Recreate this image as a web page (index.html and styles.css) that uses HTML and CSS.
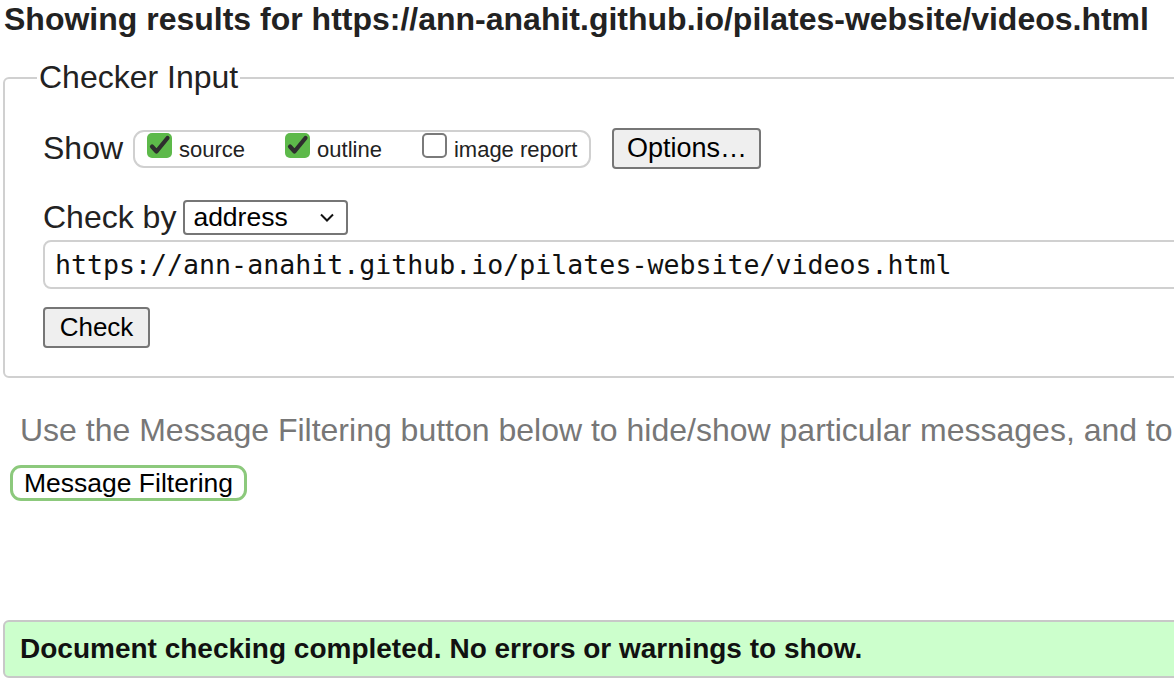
FILE: index.html
```html
<!DOCTYPE html>
<html lang="en">
<head>
<meta charset="utf-8">
<title>Nu Html Checker</title>
<link rel="stylesheet" href="styles.css">
</head>
<body>
<h2 class="title">Showing results for https://ann-anahit.github.io/pilates-website/videos.html</h2>
<form class="form">
  <fieldset class="checker">
    <legend class="legend">Checker Input</legend>
    <div class="row show-row">
      <span class="label">Show</span>
      <div class="group">
        <label class="opt">
          <span class="box checked"><svg width="25" height="25" viewBox="0 0 25 25"><path d="M5 13.5 L9.5 18.5 L20.5 5" fill="none" stroke="#2e2e2e" stroke-width="4.2" stroke-linecap="round" stroke-linejoin="round"/></svg></span>
          <span class="opt-text">source</span>
        </label>
        <label class="opt">
          <span class="box checked"><svg width="25" height="25" viewBox="0 0 25 25"><path d="M5 13.5 L9.5 18.5 L20.5 5" fill="none" stroke="#2e2e2e" stroke-width="4.2" stroke-linecap="round" stroke-linejoin="round"/></svg></span>
          <span class="opt-text">outline</span>
        </label>
        <label class="opt">
          <span class="box"></span>
          <span class="opt-text">image report</span>
        </label>
      </div>
      <button type="button" class="btn options">Options…</button>
    </div>
    <div class="row by-row">
      <span class="label">Check by</span>
      <div class="select">
        <span>address</span>
        <svg width="14" height="9" viewBox="0 0 14 9"><path d="M1 1.5 L7 7.5 L13 1.5" fill="none" stroke="#111" stroke-width="2"/></svg>
      </div>
    </div>
    <div class="url">https://ann-anahit.github.io/pilates-website/videos.html</div>
    <button type="button" class="btn check">Check</button>
  </fieldset>
</form>
<p class="hint">Use the Message Filtering button below to hide/show particular messages, and to</p>
<button type="button" class="filter">Message Filtering</button>
<div class="success">Document checking completed. No errors or warnings to show.</div>
</body>
</html>
```
FILE: styles.css
```css
html, body {
  margin: 0;
  padding: 0;
  overflow: hidden;
  background: #fff;
}
body {
  font-family: "Liberation Sans", Arial, sans-serif;
  color: #222;
  width: 1500px;
}
.title {
  margin: 0;
  padding: 1px 0 0 4px;
  font-size: 32px;
  font-weight: bold;
  line-height: 37px;
  color: #222;
  white-space: nowrap;
}
.form {
  margin: 21px 0 0 3px;
}
.checker {
  margin: 0;
  width: 1400px;
  box-sizing: border-box;
  border: 2px solid #d0d0d0;
  border-radius: 6px;
  padding: 32px 0 28px 38px;
}
.legend {
  font-size: 32px;
  line-height: 37px;
  padding: 0 2px;
  margin-left: -6px;
  color: #222;
}
.row {
  display: flex;
  align-items: center;
}
.label {
  font-size: 32px;
  line-height: 37px;
  color: #222;
}
.show-row {
  height: 41px;
}
.group {
  display: flex;
  align-items: center;
  margin-left: 10px;
  height: 38px;
  box-sizing: border-box;
  border: 2px solid #d0d0d0;
  border-radius: 11px;
  padding: 0 12px 0 12px;
}
.opt {
  display: flex;
  align-items: center;
  margin-right: 40px;
}
.opt:last-child {
  margin-right: 0;
}
.box {
  display: block;
  width: 25px;
  height: 25px;
  box-sizing: border-box;
  border: 2px solid #7a7a7a;
  border-radius: 5px;
  margin-bottom: 7px;
  margin-right: 7px;
  background: #fff;
}
.box.checked {
  border: none;
  background: #5db94a;
}
.box svg {
  display: block;
}
.opt-text {
  font-size: 22px;
  color: #222;
  margin-top: 2px;
}
.btn {
  font-family: "Liberation Sans", Arial, sans-serif;
  background: #efefef;
  border: 2px solid #767676;
  border-radius: 4px;
  color: #000;
  padding: 0;
  height: 41px;
  box-sizing: border-box;
}
.options {
  width: 149px;
  margin-left: 21px;
  font-size: 27px;
}
.by-row {
  margin-top: 30px;
}
.select {
  margin-left: 7px;
  width: 165px;
  height: 35px;
  box-sizing: border-box;
  border: 2px solid #767676;
  border-radius: 4px;
  display: flex;
  align-items: center;
  justify-content: space-between;
  padding: 0 12px 0 8px;
  font-size: 26.5px;
  color: #000;
}
.url {
  margin-top: 4px;
  height: 49px;
  box-sizing: border-box;
  border: 2px solid #d0d0d0;
  border-radius: 8px;
  padding: 0 0 0 10px;
  display: flex;
  align-items: center;
  font-family: "DejaVu Sans Mono", monospace;
  font-size: 26.6px;
  color: #111;
  white-space: nowrap;
}
.check {
  display: block;
  margin-top: 18px;
  width: 107px;
  font-size: 26px;
}
.hint {
  margin: 34px 0 0 20px;
  font-size: 32px;
  line-height: 37px;
  color: #777;
  white-space: nowrap;
}
.filter {
  display: block;
  margin: 16px 0 0 10px;
  height: 36px;
  width: 237px;
  box-sizing: border-box;
  background: #fff;
  border: 3px solid #8cc97c;
  border-radius: 11px;
  padding: 0;
  font-family: "Liberation Sans", Arial, sans-serif;
  font-size: 26.5px;
  color: #000;
}
.success {
  margin: 119px 0 0 3px;
  width: 1400px;
  height: 58px;
  box-sizing: border-box;
  background: #ccffcc;
  border: 2px solid #c8c8c8;
  border-radius: 6px;
  padding: 0 0 0 15px;
  display: flex;
  align-items: center;
  font-size: 28px;
  font-weight: bold;
  color: #111;
}
```
